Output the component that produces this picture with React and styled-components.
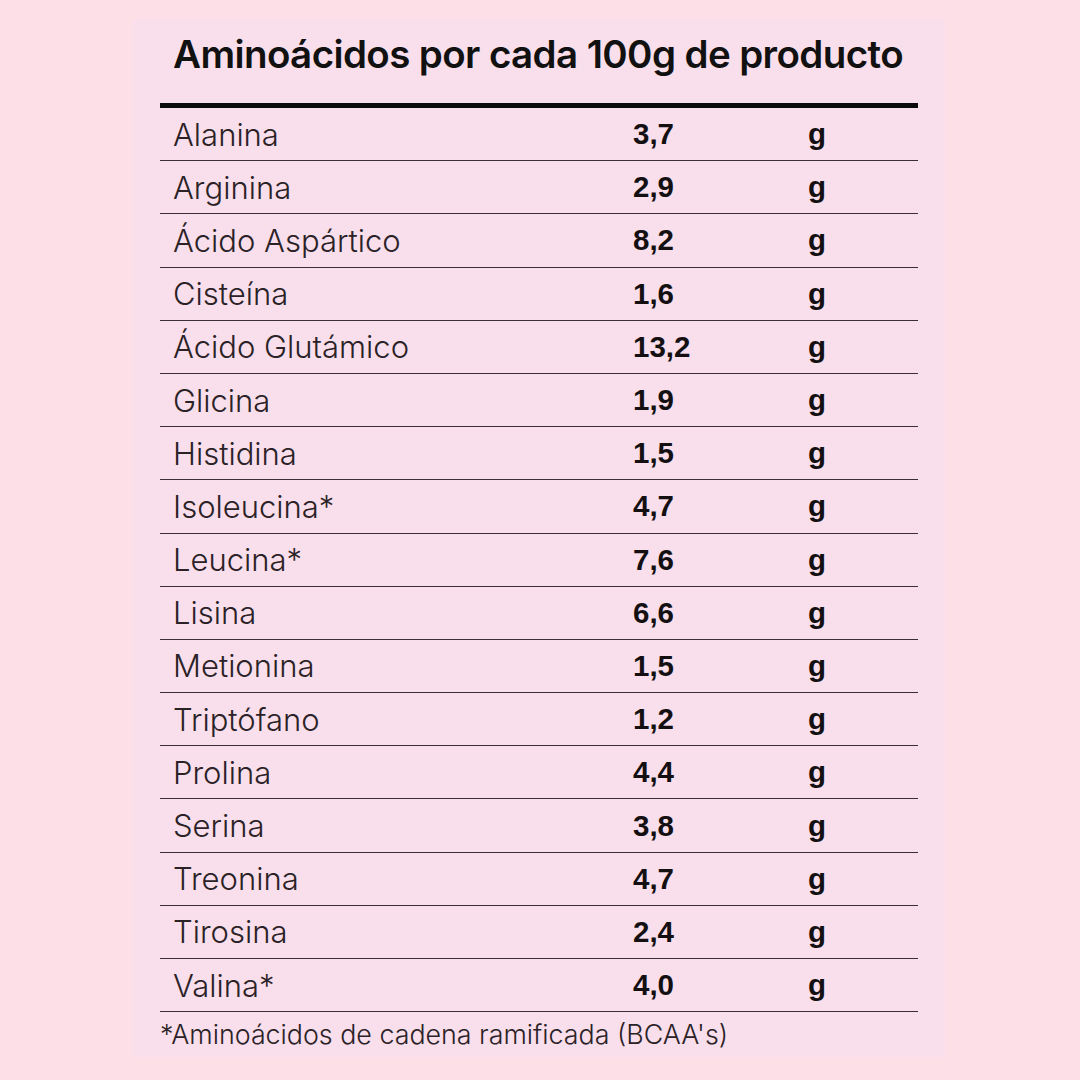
import React from 'react';
import styled, { createGlobalStyle } from 'styled-components';

const GlobalStyle = createGlobalStyle`
  html, body {
    margin: 0;
    padding: 0;
    background: #fde0e7;
  }
  body {
    font-family: 'Liberation Sans', Arial, sans-serif;
  }
`;

const Page = styled.main`
  width: 1080px;
  height: 1080px;
  padding: 20px 0 0 133px;
  box-sizing: border-box;
`;

const Card = styled.section`
  width: 812px;
  height: 1037px;
  background: #f9deeb;
  padding: 0 27px;
  box-sizing: border-box;
  color: #161214;
`;

const Title = styled.h1`
  margin: 0;
  padding: 15px 0 0 13px;
  height: 68px;
  font-family: Inter, 'Liberation Sans', sans-serif;
  font-weight: 600;
  font-size: 38.5px;
  letter-spacing: -0.6px;
  line-height: 1;
  color: #111;
  border-bottom: 5px solid #0c0a0b;
  box-sizing: content-box;
  white-space: nowrap;
`;

const Table = styled.div`
  display: flex;
  flex-direction: column;
`;

const Row = styled.div`
  display: grid;
  grid-template-columns: 473px 175px 1fr;
  align-items: center;
  height: 53.2px;
  border-bottom: 1.5px solid #3a3034;
  box-sizing: border-box;
`;

const Name = styled.span`
  padding-left: 13px;
  font-family: Inter, 'Liberation Sans', sans-serif;
  font-weight: 300;
  font-size: 31px;
  color: #2a2226;
`;

const Value = styled.span`
  font-weight: 700;
  font-size: 29.5px;
  color: #141012;
`;

const Note = styled.p`
  margin: 9px 0 0;
  font-family: Inter, 'Liberation Sans', sans-serif;
  font-weight: 300;
  font-size: 26.8px;
  line-height: 1;
  color: #2a2226;
`;

const rows = [
  ['Alanina', '3,7'],
  ['Arginina', '2,9'],
  ['Ácido Aspártico', '8,2'],
  ['Cisteína', '1,6'],
  ['Ácido Glutámico', '13,2'],
  ['Glicina', '1,9'],
  ['Histidina', '1,5'],
  ['Isoleucina*', '4,7'],
  ['Leucina*', '7,6'],
  ['Lisina', '6,6'],
  ['Metionina', '1,5'],
  ['Triptófano', '1,2'],
  ['Prolina', '4,4'],
  ['Serina', '3,8'],
  ['Treonina', '4,7'],
  ['Tirosina', '2,4'],
  ['Valina*', '4,0'],
];

export default function App() {
  return (
    <Page>
      <GlobalStyle />
      <Card>
        <Title>Aminoácidos por cada 100g de producto</Title>
        <Table>
          {rows.map(([name, value]) => (
            <Row key={name}>
              <Name>{name}</Name>
              <Value>{value}</Value>
              <Value>g</Value>
            </Row>
          ))}
        </Table>
        <Note>*Aminoácidos de cadena ramificada (BCAA's)</Note>
      </Card>
    </Page>
  );
}
